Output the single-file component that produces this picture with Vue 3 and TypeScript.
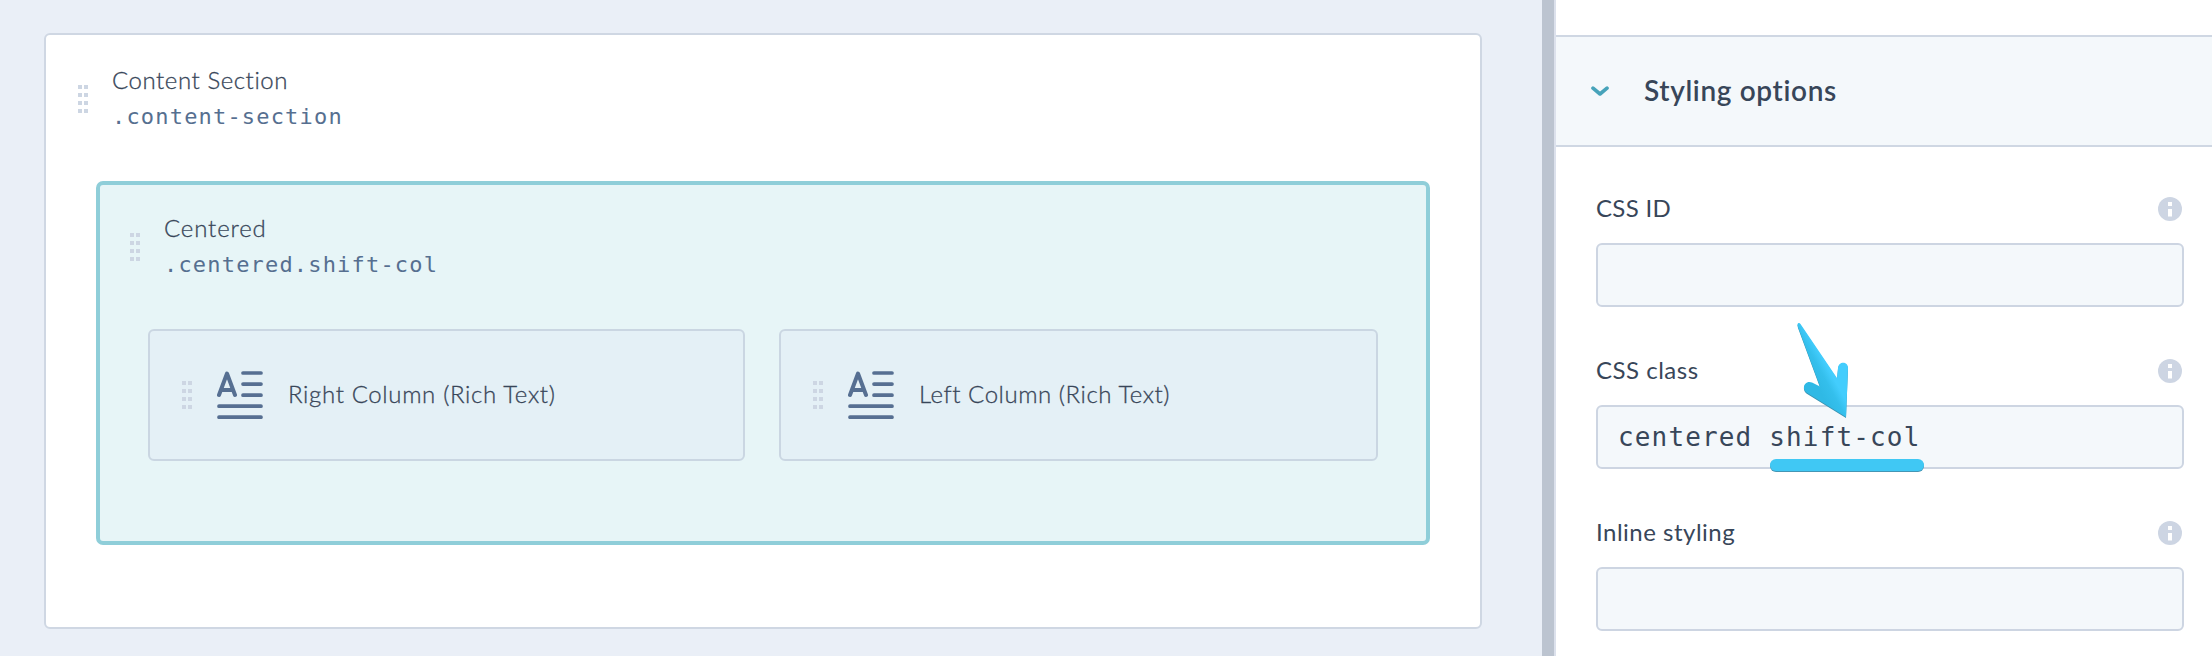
<script setup lang="ts">
interface Field {
  id: string
  label: string
  value: string
}

const columns: { name: string; cls: string }[] = [
  { name: 'Right Column (Rich Text)', cls: 'right' },
  { name: 'Left Column (Rich Text)', cls: 'left' },
]

const fields: Field[] = [
  { id: 'css-id', label: 'CSS ID', value: '' },
  { id: 'css-class', label: 'CSS class', value: 'centered shift-col' },
  { id: 'inline', label: 'Inline styling', value: '' },
]
</script>

<template>
  <div class="page">
    <main class="canvas">
      <section class="card">
        <header class="head">
          <span class="grip"><i v-for="n in 8" :key="n"></i></span>
          <div>
            <div class="name section-name">Content Section</div>
            <div class="selector">.content-section</div>
          </div>
        </header>
        <section class="group">
          <header class="head">
            <span class="grip"><i v-for="n in 8" :key="n"></i></span>
            <div>
              <div class="name centered-name">Centered</div>
              <div class="selector">.centered.shift-col</div>
            </div>
          </header>
          <div class="columns">
            <article v-for="col in columns" :key="col.name" class="column">
              <span class="grip"><i v-for="n in 8" :key="n"></i></span>
              <svg class="rich" width="46" height="48" viewBox="0 0 46 48" fill="none" stroke="#566f92" stroke-width="4" stroke-linecap="round" stroke-linejoin="round">
                <path d="M2 24 10 2.5 18 24M5.500 19H14.500" />
                <path d="M26 2H44M26 13.100H44M26 24.200H44M2 35.200H44M2 46.200H44" stroke-width="3.700" />
              </svg>
              <span class="name" :class="col.cls">{{ col.name }}</span>
            </article>
          </div>
        </section>
      </section>
    </main>
    <div class="divider"></div>
    <aside class="panel">
      <header class="panel-head">
        <svg width="18" height="11" viewBox="0 0 18 11" fill="none" stroke="#47a3ba" stroke-width="3.600" stroke-linecap="round" stroke-linejoin="round">
          <path d="M2 2.200 9 8 16 2.200" />
        </svg>
        <h2>Styling options</h2>
      </header>
      <div class="fields">
        <div v-for="f in fields" :key="f.id" class="field">
          <div class="label-row">
            <label :class="f.id">{{ f.label }}</label>
            <svg width="24" height="24" viewBox="0 0 24 24">
              <circle cx="12" cy="12" r="12" fill="#cdd5e3" />
              <path d="M10 5h4v4h-4zM10 12h4v7.500h-4z" fill="#fff" />
            </svg>
          </div>
          <div class="input">
            <span>{{ f.value }}</span>
            <template v-if="f.id === 'css-class'">
              <div class="underline"></div>
              <svg class="arrow" width="56" height="100" viewBox="0 0 56 100">
                <defs>
                  <linearGradient id="blade" gradientUnits="userSpaceOnUse" x1="22" y1="62" x2="42" y2="51">
                    <stop offset="0" stop-color="#2fb9e5" />
                    <stop offset="0.450" stop-color="#34bfec" />
                    <stop offset="0.800" stop-color="#43cdfd" />
                    <stop offset="1" stop-color="#43cdfd" />
                  </linearGradient>
                </defs>
                <path class="shade" d="M3.500 2.500C4 .8 5.500.6 6.500 2L43 56 44 46C44.500 39 54 39 54 46L52 95 14 71.500C6 67 11 57.500 18 60.500L26 64.500 4 5Z" fill="url(#blade)" />
              </svg>
            </template>
          </div>
        </div>
      </div>
    </aside>
  </div>
</template>

<style>
body {
  margin: 0;
  overflow: hidden;
}
</style>

<style scoped>
* {
  box-sizing: border-box;
}
.page {
  display: flex;
  width: 2212px;
  height: 656px;
  overflow: hidden;
  font-family: Lato, "Open Sans", sans-serif;
  color: #384659;
  background: #fff;
}
.canvas {
  width: 1542px;
  padding: 33px 60px 27px 44px;
  background: #eaeff7;
}
.card {
  height: 596px;
  padding: 28px 50px 0;
  border: 2px solid #cfd7e3;
  border-radius: 6px;
  background: #fff;
}
.head {
  display: flex;
  align-items: flex-start;
}
.grip {
  display: grid;
  grid-template-columns: 4px 4px;
  grid-auto-rows: 4px;
  gap: 4px 2px;
  flex: none;
}
.grip i {
  background: #cdd6e3;
}
.card > .head {
  height: 118px;
  margin-left: -18px;
}
.card > .head .grip,
.group > .head .grip {
  margin: 22px 24px 0 0;
}
.name {
  padding-bottom: 2px;
  font-size: 24px;
  font-weight: 300;
  line-height: 34px;
  white-space: pre;
  color: #384659;
  -webkit-text-stroke: 0.300px #384659;
}
.section-name {
  letter-spacing: 0.560px;
}
.centered-name {
  letter-spacing: 0.850px;
}
.right {
  letter-spacing: 0.650px;
}
.left {
  letter-spacing: 0.550px;
}
.selector {
  font-family: "DejaVu Sans Mono", monospace;
  font-size: 22px;
  line-height: 36px;
  letter-spacing: 1.180px;
  color: #566f90;
}
.group {
  height: 364px;
  padding: 26px 48px 0;
  border: 4px solid #8fced9;
  border-radius: 7px;
  background: #e7f5f7;
}
.group > .head {
  height: 118px;
  margin-left: -18px;
}
.columns {
  display: grid;
  grid-template-columns: 597px 599px;
  gap: 34px;
}
.column {
  display: flex;
  align-items: center;
  height: 132px;
  padding-left: 32px;
  border: 2px solid #cad6e2;
  border-radius: 6px;
  background: #e4f0f6;
}
.rich {
  margin: 0 25px;
}
.divider {
  width: 14px;
  background: #bcc4d0;
  border-right: 2px solid #dce1ec;
}
.panel {
  width: 656px;
  padding-top: 35px;
}
.panel-head {
  display: flex;
  align-items: center;
  height: 112px;
  padding-left: 35px;
  border-top: 2px solid #cfd7e3;
  border-bottom: 2px solid #cfd7e3;
  background: #f4f8fb;
}
h2 {
  margin: 0 0 2px 35px;
  font-size: 28px;
  font-weight: 600;
  letter-spacing: 0.640px;
}
.fields {
  display: grid;
  gap: 34px;
  width: 588px;
  margin: 44px 0 0 40px;
}
.field {
  height: 128px;
  padding-top: 6px;
  font-size: 24px;
}
.label-row {
  display: flex;
  align-items: center;
  justify-content: space-between;
  height: 24px;
  padding-right: 2px;
  margin-bottom: 22px;
}
label {
  padding-bottom: 3px;
  letter-spacing: 0.500px;
}
.css-id {
  letter-spacing: 0.300px;
}
.input {
  position: relative;
  height: 64px;
  padding-left: 20px;
  border: 2px solid #cdd5e2;
  border-radius: 6px;
  background: #f4f8fb;
  font: 26px/60px "DejaVu Sans Mono", monospace;
  letter-spacing: 1.150px;
}
.underline {
  position: absolute;
  left: 172px;
  top: 52px;
  width: 154px;
  height: 12px;
  border-radius: 6px;
  background: #40c8f4;
  box-shadow: 0 1px 0 #4496b5;
}
.arrow {
  position: absolute;
  left: 196px;
  top: -85px;
}
.shade {
  filter: drop-shadow(0.500px 1px 0 #3a93b1);
}
</style>
